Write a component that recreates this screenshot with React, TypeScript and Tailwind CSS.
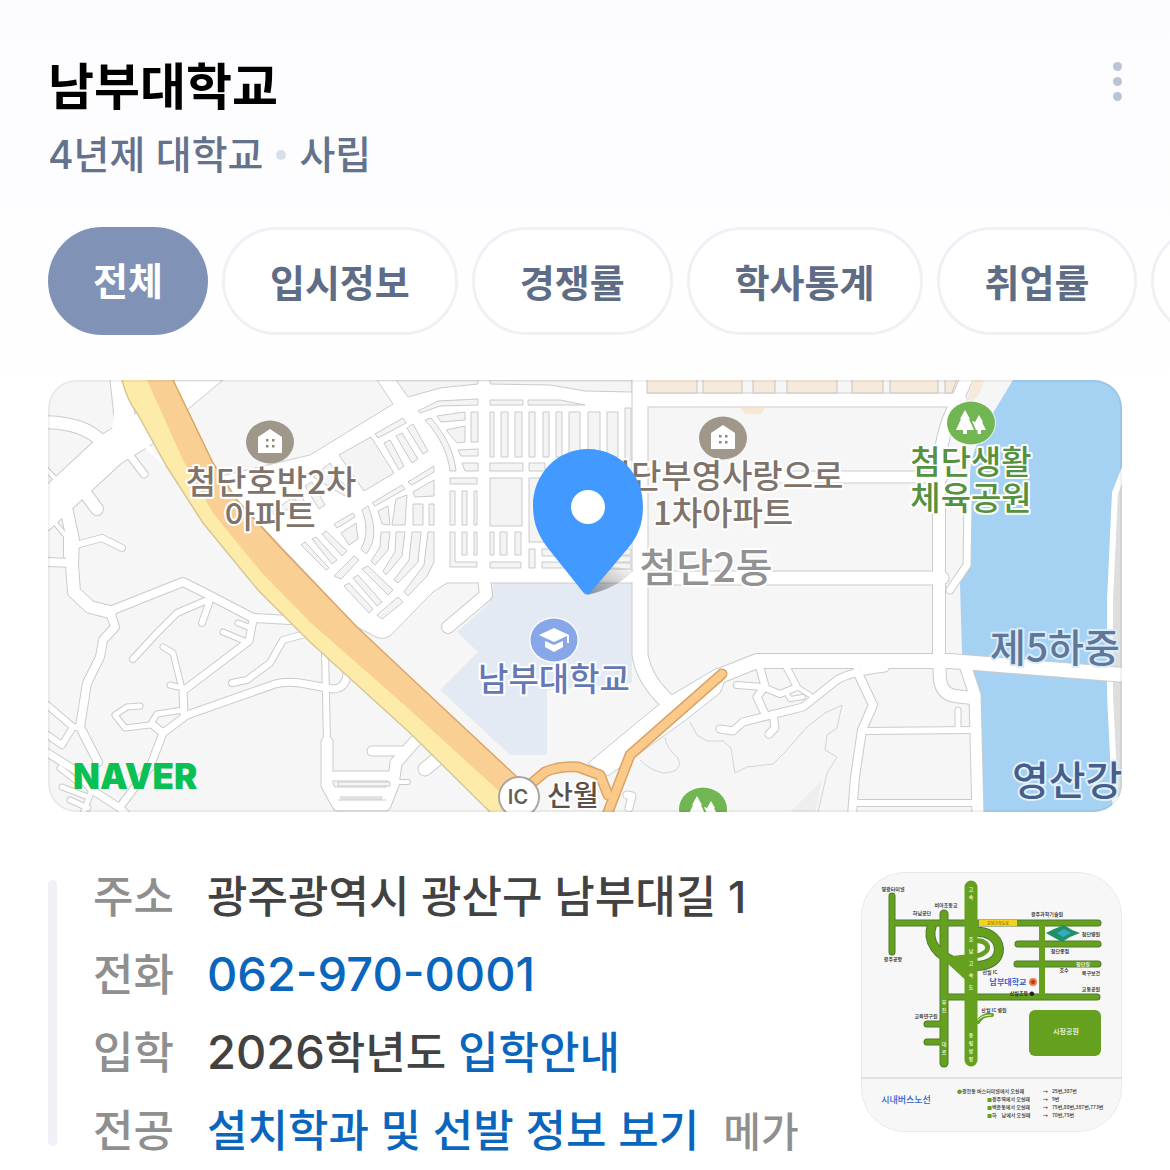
const SANS = "font-['Inter','Noto_Sans_CJK_KR',sans-serif]";

type Road = { d: string; w: number };

const roads: Road[] = [
  { d: 'M120 375 L126 430', w: 20 },
  { d: 'M150 425 L110 450 L40 515', w: 34 },
  { d: 'M40 422 C70 422 90 428 104 444', w: 12 },
  { d: 'M128 453 L144 474', w: 7 },
  { d: 'M86 494 L97 509', w: 12 },
  { d: 'M46 469 L62 486', w: 4 },
  { d: 'M67 512 L73 540 L72 565 L74 592 L90 607 L110 612', w: 12 },
  { d: 'M110 612 L115 627 L103 640 L100 657 L87 683 L80 727 L98 762', w: 8 },
  { d: 'M76 545 L102 538 L122 548', w: 6 },
  { d: 'M46 562 L72 563', w: 8 },
  { d: 'M56 524 L66 536 L66 556', w: 4 },
  { d: 'M110 611 L183 582 L205 593 L253 618 L290 620', w: 8 },
  { d: 'M205 601 L177 613 L157 633 L133 659', w: 6 },
  { d: 'M210 600 L202 623', w: 6 },
  { d: 'M253 620 L249 641 L183 691 L184 714', w: 7 },
  { d: 'M238 623 L251 628 M223 632 L247 642', w: 5 },
  { d: 'M163 647 L173 653 L183 693 M170 685 L178 687', w: 5 },
  { d: 'M232 683 L247 680 L270 663 L283 640 L305 634', w: 6 },
  { d: 'M163 733 L187 715 L275 684 Q285 681 300 683 L333 689 Q347 688 347 672', w: 7 },
  { d: 'M140 706 L127 707 L115 715 L125 728 L150 725 L157 714 L183 710', w: 5 },
  { d: 'M153 725 L163 733 L150 767 L120 807', w: 7 },
  { d: 'M46 704 L73 727 L62 745 L46 734 M73 727 L80 727', w: 6 },
  { d: 'M46 752 L75 770 L92 790 L120 808 L128 816', w: 7 },
  { d: 'M60 768 L80 784 M62 787 L88 797 M70 800 L88 808 M92 790 L82 816', w: 5 },
  { d: 'M325 650 L327 742', w: 6 },
  { d: 'M327 742 L327 785 L338 805 L385 805 L393 785 L396 763 L418 738', w: 11 },
  { d: 'M333 776 L388 776 M333 792 L388 792', w: 9 },
  { d: 'M395 782 L408 782', w: 4 },
  { d: 'M372 751 L402 751', w: 9 },
  { d: 'M425 769 L442 755', w: 13 },
  { d: 'M448 627 L486 595 L484 578', w: 12 },
  { d: 'M640 375 L640 655 Q644 680 668 702', w: 15 },
  { d: 'M640 578 L942 578', w: 13 },
  { d: 'M770 477 L942 477', w: 11 },
  { d: 'M640 400 L960 400', w: 13 },
  { d: 'M968 375 L952 412 Q939 440 939 480 L939 660 L940 680 Q942 694 955 696 L972 698', w: 12 },
  { d: 'M722 675 L757 661 L950 661 L1126 675', w: 14 },
  { d: 'M968 500 L967 565 L950 590', w: 7 },
  { d: 'M966 668 L975 695 L978 816', w: 11 },
  { d: 'M857 671 L873 705 L862 730 L855 777 L852 816', w: 8 },
  { d: 'M862 731 L975 730 M855 803 L977 803', w: 6 },
  { d: 'M958 730 L958 710', w: 5 },
  { d: 'M760 668 L765 686 L757 697 L765 714', w: 7 },
  { d: 'M737 685 L763 687 L780 694 L797 687 L787 668', w: 6 },
  { d: 'M720 729 L733 731 L743 722 L803 707 L837 680 Q850 672 885 668', w: 7 },
  { d: 'M773 714 L775 728 L769 734', w: 7 },
  { d: 'M797 687 L810 695 M786 692 L790 699 L803 697', w: 4 },
  { d: 'M627 795 L632 796 L629 808', w: 7 },
];

const blocks = [
  // upper strip and curved street
  'M396 380 H478 V384 L440 388 L408 397Z',
  'M490 380 H632 V392 L585 391 L550 385 L490 384Z',
  'M418 411 L438 401 L478 399 V405 L440 406 L420 413Z',
  'M490 400 H523 V405 H490Z', 'M528 400 H560 L585 405 H528Z',
  'M437 416 L465 412 V420 L441 422Z', 'M471 412 H478 V442 H471Z',
  'M446 430 L465 426 V442 L457 443Z', 'M458 450 L478 449 V456 H461Z',
  'M462 463 H478 V471 H465Z',
  'M425 420 L431 418 C446 436 454 452 456 471 H450 C448 454 440 436 425 420Z',
  // column blocks
  'M490 412 H494 V457 H490Z', 'M501 412 H508 V457 H501Z', 'M515 412 H522 V457 H515Z',
  'M529 412 H535 V457 H529Z', 'M543 412 H549 V457 H543Z', 'M556 412 H562 V457 H556Z',
  'M569 412 H580 V457 H569Z', 'M588 412 H600 V457 H588Z', 'M607 412 H618 V457 H607Z', 'M625 408 H631 V460 H625Z',
  'M490 463 H523 V471 H490Z', 'M529 463 H545 V471 H529Z',
  'M490 478 H522 V526 H490Z', 'M529 478 H560 V542 H529Z',
  'M450 478 H477 V484 H450Z', 'M450 491 H455 V525 H450Z', 'M462 491 H467 V525 H462Z', 'M474 491 H477 V525 H474Z',
  'M450 532 H455 V562 H477 V567 H450Z', 'M462 532 H467 V555 H462Z', 'M474 532 H477 V555 H474Z',
  'M490 532 H494 V555 H490Z', 'M500 532 H507 V555 H500Z', 'M515 532 H521 V555 H515Z',
  'M490 562 H521 V568 H490Z', 'M529 549 H535 V568 H529Z', 'M542 549 H570 V556 H542Z', 'M542 562 H572 V568 H542Z',
  'M608 549 H631 V555 H608Z', 'M604 556 H631 V562 H604Z', 'M600 563 H631 V569 H600Z',
  // diagonal blocks
  'M375 434 L403 418 L406 423 L378 438Z', 'M407 428 L413 424 L428 451 L423 454Z',
  'M384 443 L390 440 L404 466 L399 470Z', 'M396 436 L402 433 L418 459 L412 463Z',
  'M339 455 L371 437 L394 473 L364 491Z', 'M313 477 L330 463 L340 480 L350 490 L345 496Z',
  'M372 503 L402 485 L405 489 L375 506Z', 'M408 482 L434 466 V472 L412 485Z',
  'M413 492 L434 480 V496 L415 497Z', 'M413 504 H423 V525 H413Z', 'M429 504 H434 V525 H429Z',
  'M396 499 L407 495 L405 525 H392Z', 'M378 511 L388 506 L390 525 L382 524Z',
  'M362 510 L368 506 C377 528 375 543 366 554 L361 549 C368 536 367 524 362 510Z',
  'M341 533 L356 523 L358 539 L349 545Z', 'M334 524 L353 513 L355 517 L337 528Z',
  'M381 532 H390 L388 550 L375 565 L371 561 L380 547Z', 'M396 532 H405 L402 556 L386 575 L383 571 L395 552Z',
  'M412 532 H421 L418 562 L398 583 L394 580 L409 560Z', 'M428 532 H434 V562 L427 576 L408 596 L404 592 L424 565Z',
  'M334 576 L354 556 L359 560 L341 579Z', 'M322 534 L326 531 L347 551 L342 556Z', 'M312 539 L316 537 L337 560 L332 564Z',
  'M362 569 L368 566 L393 590 L388 595Z', 'M353 578 L358 575 L382 602 L377 606Z',
  'M344 586 L349 583 L373 609 L369 613Z', 'M377 615 L398 597 L403 602 L382 619Z',
  'M272 512 L292 498 L296 503 L276 517Z', 'M305 486 L312 482 L325 505 L319 509Z', 'M293 496 L299 492 L311 513 L305 516Z',
  'M301 545 L305 542 L329 568 L326 570Z',
];

const beige = ['M647 378 H697 V393 H647Z', 'M703 378 H742 V393 H703Z', 'M753 378 H775 V393 H753Z', 'M787 378 H837 V393 H787Z', 'M852 378 H883 V393 H852Z', 'M890 378 H938 V393 H890Z', 'M945 378 H957 L952 393 H945Z'];

function MapLabel({ x, y, size, color, halo = '#ffffff', anchor = 'middle', children }: { x: number; y: number; size: number; color: string; halo?: string; anchor?: 'start' | 'middle'; children: string }) {
  return (
    <text x={x} y={y} fontSize={size} fill={color} stroke={halo} strokeWidth="4" strokeLinejoin="round" paintOrder="stroke" textAnchor={anchor} className="font-['Noto_Sans_CJK_KR',sans-serif] font-medium">
      {children}
    </text>
  );
}

function HomeMarker({ x, y }: { x: number; y: number }) {
  return (
    <g transform={`translate(${x} ${y})`}>
      <ellipse rx="24" ry="21.5" fill="#a0978b" />
      <path d="M-12 -5 L0 -13 L12 -5 V11 H-12Z" fill="#fff" />
      <path d="M-4 -3 h2.500 v2.500 h-2.500z M2 -3 h2.500 v2.500 h-2.500z M-4 3 h2.500 v2.500 h-2.500z M2 3 h2.500 v2.500 h-2.500z" fill="#8f867b" />
    </g>
  );
}

function ParkMarker({ x, y }: { x: number; y: number }) {
  return (
    <g transform={`translate(${x} ${y})`}>
      <ellipse rx="25" ry="22.500" fill="#fff" opacity="0.7" />
      <ellipse rx="24" ry="21.5" fill="#72b653" />
      <path d="M-6 -13 L-1 -4 H-2 L3 7 H-4 V11 H-8 V7 H-15 L-10 -4 H-11Z" fill="#fff" />
      <path d="M8 -8 L12 -1 H11 L15 7 H10 V11 H6.500 V7 H5 L1 -2 L4 -1Z" fill="#fff" />
    </g>
  );
}

function CampusMap() {
  return (
    <svg viewBox="48 380 1074 432" className="block h-auto w-full" role="img" aria-label="남부대학교 위치 지도">
      <defs>
        <linearGradient id="pinShadow" x1="0" x2="1" y1="1" y2="0">
          <stop offset="0" stopColor="#000" stopOpacity="0.4" />
          <stop offset="1" stopColor="#000" stopOpacity="0" />
        </linearGradient>
      </defs>
      <rect x="48" y="380" width="1074" height="432" fill="#f6f6f6" />

      <path d="M493 583 H632 V683 L547 690 V755 H510 L440 690 L478 652 L457 632 L490 602Z" fill="#e3eaf4" />
      <path d="M165 380 H223 L187 410Z" fill="#fff" stroke="#cacaca" />
      <path d="M213 478 L310 455 L393 404 L377 380 H640 V583 H447 L433 592 L390 636 Q384 640 376 637 L357 627 L237 500Z" fill="#fff" stroke="#cccccc" />
      <g fill="#f4f4f4" stroke="#cacaca" strokeWidth="1">
        {blocks.map((d) => <path key={d} d={d} />)}
      </g>

      <path d="M1013 380 L993 413 C978 440 970 455 970 480 V563 L960 583 L962 653 L972 672 L977 697 L983 812 H1122 V380Z" fill="#a5d1f2" />
      <path d="M1126 455 L1115 493 L1110 600 L1111 660 L1110 695 L1116 816 H1126Z" fill="#dedede" />
      <path d="M1126 465 L1115 493 L1110 600 V665 L1110 695 L1116 816" fill="none" stroke="#fff" strokeWidth="6" />
      <g fill="none" stroke="#d4d4d4" strokeWidth="1">
        <path d="M690 722 L697 735 L707 741 H723 L731 748 L735 773 L747 767 L773 764 L785 752 L807 727 L825 713 L842 705 L837 728 L827 735 L825 750 L837 757 L827 773 L818 812" />
        <path d="M665 737 Q666 748 678 758 Q684 772 663 773 Q650 770 640 760" />
      </g>
      <path d="M822 780 L815 812 H790Z" fill="#eeeeee" />

      <g fill="none" stroke="#cbcbcb" strokeLinecap="round" strokeLinejoin="round">
        {roads.map((r) => <path key={r.d} d={r.d} strokeWidth={r.w + 2} />)}
      </g>
      <path d="M717 668 L668 697 L588 763 L608 776 L683 722 L720 693 L727 676Z" fill="#fff" stroke="#c3ccd6" />
      <g fill="none" stroke="#fff" strokeLinecap="round" strokeLinejoin="round">
        {roads.map((r) => <path key={r.d} d={r.d} strokeWidth={r.w} />)}
      </g>
      <path d="M118 380 L137 430 L167 467 L145 448 L128 452 L110 450 L112 430Z" fill="#fff" />
      <path d="M476 570 H492 V582 H476Z M618 572 H640 V582 H618Z M634 381 H646 V392 H634Z" fill="#fff" />
      <path d="M338 782 h52 v4 h-52z M338 800 h48" fill="#f4f4f4" stroke="#cacaca" />

      <g fill="#f6eadd" stroke="#c9c3bd" strokeWidth="1">
        {beige.map((d) => <path key={d} d={d} />)}
      </g>
      <path d="M741 408 h24 l-4 6 h-16z" fill="#f8e8d2" />
      <path d="M972 380 h12 l-4 14 l-14 12z" fill="#f6eadd" />

      <path d="M122 380 Q127 400 137 413 L167 467 L203 523 L258 590 L310 642 L410 733 L490 812 H530 L517 777 L410 677 L357 627 L280 547 L237 500 L213 463 L173 380Z" fill="#fdebaa" />
      <path d="M147 380 L183 460 L213 513 L262 573 L310 622 L410 710 L500 792 L505 812 H535 L517 777 L410 677 L357 627 L280 547 L237 500 L213 463 L173 380Z" fill="#facf93" />
      <path d="M173 380 L213 463 L237 500 L280 547 L357 627 L410 677 L517 777" fill="none" stroke="#dda468" strokeWidth="1.500" />
      <path d="M122 380 Q127 400 137 413 L167 467 L203 523 L258 590 L310 642 L410 733 L490 812" fill="none" stroke="#d6c795" strokeWidth="1.500" />

      <g fill="none" strokeLinecap="round" strokeLinejoin="round">
        <g stroke="#dca365" strokeWidth="11">
          <path d="M526 788 L545 772 Q558 766 578 767 L600 775 L608 795" />
          <path d="M722 674 L630 755 L605 820" />
        </g>
        <g stroke="#fbca8a" strokeWidth="8">
          <path d="M526 788 L545 772 Q558 766 578 767 L600 775 L608 795" />
          <path d="M722 674 L630 755 L605 820" />
        </g>
      </g>
      <circle cx="519" cy="797" r="20" fill="#fff" stroke="#aaa59f" strokeWidth="2" />
      <text x="518" y="804" fontSize="20" fill="#67605a" textAnchor="middle" className="font-['Inter',sans-serif] font-semibold">IC</text>

      <HomeMarker x={270} y={442} />
      <HomeMarker x={723} y={438} />
      <ParkMarker x={971} y={423} />
      <ParkMarker x={703} y={809} />
      <g transform="translate(554 640)">
        <ellipse rx="25" ry="23" fill="#fff" opacity="0.8" />
        <ellipse rx="23.500" ry="21.500" fill="#88a7e8" />
        <path d="M-15 -5 L0 -12 L15 -5 L0 2Z M-9 1 L0 5 L9 1 V7 L0 12 L-9 7Z M13 -5 h2 V3 h-2z" fill="#fff" />
      </g>

      <MapLabel x={271} y={494} size={33} color="#80736a">첨단호반2차</MapLabel>
      <MapLabel x={270} y={528} size={33} color="#80736a">아파트</MapLabel>
      <MapLabel x={722} y={488} size={33} color="#80736a">첨단부영사랑으로</MapLabel>
      <MapLabel x={723} y={525} size={33} color="#80736a">1차아파트</MapLabel>
      <MapLabel x={706} y={582} size={40} color="#929292">첨단2동</MapLabel>
      <MapLabel x={971} y={474} size={33} color="#55913f">첨단생활</MapLabel>
      <MapLabel x={971} y={510} size={33} color="#55913f">체육공원</MapLabel>
      <MapLabel x={554} y={691} size={33} color="#6478b4">남부대학교</MapLabel>
      <MapLabel x={990} y={662} size={39} color="#60779a" halo="#d9ecfa" anchor="start">제5하중</MapLabel>
      <MapLabel x={1012} y={795} size={40} color="#455f8c" halo="#e2f0fb" anchor="start">영산강</MapLabel>
      <MapLabel x={573} y={806} size={28} color="#5d4f49">산월</MapLabel>

      <path d="M587 595 L612 566 L634 570 Q618 588 587 595Z" fill="url(#pinShadow)" />
      <path d="M588 449 C557 449 533 474 533 506 C533 524 539 536 547 547 L583 592 Q587 597 591 592 L629 547 C638 536 643 524 643 506 C643 474 619 449 588 449Z" fill="#4299ff" />
      <circle cx="588" cy="507" r="17" fill="#fff" />

      <text x="73" y="789" fontSize="35" fill="#0abf53" className="font-['Inter',sans-serif] font-black">NAVER</text>
    </svg>
  );
}

const directions: { x: number; y: number; t: string; c?: string; s?: number }[] = [
  { x: 893, y: 891, t: '영광터미널' }, { x: 893, y: 961, t: '광주공항' }, { x: 922, y: 915, t: '하남공단' },
  { x: 946, y: 907, t: '비아초등교' }, { x: 1047, y: 916, t: '광주과학기술원' }, { x: 1091, y: 936, t: '첨단병원' },
  { x: 1060, y: 953, t: '첨단종점' }, { x: 1064, y: 972, t: '호수' }, { x: 1091, y: 975, t: '북구보건' }, { x: 1091, y: 991, t: '교통공원' },
  { x: 990, y: 974, t: '산월 IC' }, { x: 1022, y: 995, t: '산월초등 ●' }, { x: 994, y: 1012, t: '산월 IC 병원' }, { x: 926, y: 1018, t: '교육연구원' },
  { x: 1083, y: 966, t: '첨단길', c: '#fff' }, { x: 1066, y: 1034, t: '시청공원', c: '#fff', s: 7 },
];

function VerticalText({ x, y, step, text }: { x: number; y: number; step: number; text: string }) {
  return <>{[...text].map((t, i) => <text key={i} x={x} y={y + i * step}>{t}</text>)}</>;
}

function DirectionsThumb() {
  return (
    <svg viewBox="861 872 261 260" className="block h-auto w-full" role="img" aria-label="남부대학교 찾아오시는 길 약도">
      <rect x="861" y="872" width="261" height="260" fill="#f7f7f7" />
      <path d="M861 1078 H1122" stroke="#e3e3e3" strokeWidth="2" />
      <g fill="none" strokeLinecap="round" strokeLinejoin="round">
        <g stroke="#4d7a2a">
          <path d="M892 896 V952 M892 923 H1098 M1018 944 H1098 M1017 964 H1098 M948 997 H1097 M927 1024 H942 M927 1042 H942" strokeWidth="7" />
          <path d="M932 925 C926 942 938 956 956 962 C976 970 999 966 999 949 C998 936 986 931 974 932" strokeWidth="10" />
          <path d="M944 914 V1063" strokeWidth="9" />
        </g>
        <g stroke="#65a11f">
          <path d="M892 896 V952 M892 923 H1098 M1018 944 H1098 M1017 964 H1098 M948 997 H1097 M927 1024 H942 M927 1042 H942" strokeWidth="5" />
          <path d="M1042 925 V995" strokeWidth="6" />
          <path d="M932 925 C926 942 938 956 956 962 C976 970 999 966 999 949 C998 936 986 931 974 932" strokeWidth="8" />
          <path d="M978 1022 Q982 1014 992 1015" strokeWidth="4" />
          <path d="M944 914 V1063" strokeWidth="7" />
          <path d="M971 887 V1060" strokeWidth="13" />
          <path d="M974 941 C986 939 992 948 984 953 C974 960 962 954 946 961" strokeWidth="5" />
        </g>
        <path d="M978 1020 Q982 1015 991 1015" stroke="#f2f7ea" strokeWidth="1" />
      </g>
      <path d="M946 962 L972 966 V986Z" fill="#65a11f" />
      <rect x="979" y="920" width="38" height="6" fill="#f5d21e" />
      <path d="M1046 933 L1054 929 L1064 925 L1072 930 L1080 933 L1070 937 L1062 942 L1053 937Z" fill="#1f9067" />
      <path d="M1057 933 L1064 929 L1071 933 L1063 937Z" fill="#38a9c2" />
      <rect x="1029" y="1010" width="72" height="46" rx="6" fill="#65a11f" />
      <circle cx="1033" cy="982" r="4" fill="#ef7b3e" />
      <circle cx="1033" cy="982" r="2" fill="#b9321f" />
      <g textAnchor="middle" className="font-['Noto_Sans_CJK_KR',sans-serif] font-medium">
        {directions.map((l) => <text key={l.t + l.x} x={l.x} y={l.y} fontSize={l.s ?? 5} fill={l.c ?? '#222'}>{l.t}</text>)}
        <text x="998" y="925" fontSize="4" fill="#7a5500">호남고속도로</text>
        <text x="1008" y="985" fontSize="8" fill="#2f61cf" className="font-bold">남부대학교</text>
        <g fontSize="5" fill="#eef7e2">
          <VerticalText x={971} y={891} step={8} text="고속" />
          <VerticalText x={971} y={941} step={12} text="호남고속도" />
          <VerticalText x={971} y={1037} step={8} text="동림방향" />
          <VerticalText x={944} y={1004} step={8} text="무진" />
          <VerticalText x={944} y={1046} step={8} text="대로" />
        </g>
        <text x="906" y="1103" fontSize="9" fill="#2f61cf">시내버스노선</text>
      </g>
      <g fontSize="5" fill="#333" className="font-['Noto_Sans_CJK_KR',sans-serif] font-medium">
        <text x="957" y="1093"><tspan fill="#65a11f">●</tspan>광천동 버스터미널에서 오실때</text>
        <text x="987" y="1101"><tspan fill="#65a11f">■</tspan>광주역에서 오실때</text>
        <text x="987" y="1109"><tspan fill="#65a11f">■</tspan>백운동에서 오실때</text>
        <text x="987" y="1117"><tspan fill="#65a11f">■</tspan>하　남에서 오실때</text>
        <text x="1043" y="1093">→</text><text x="1043" y="1101">→</text><text x="1043" y="1109">→</text><text x="1043" y="1117">→</text>
        <text x="1052" y="1093">25번,387번</text>
        <text x="1052" y="1101">9번</text>
        <text x="1052" y="1109">75번,88번,387번,773번</text>
        <text x="1052" y="1117">70번,75번</text>
      </g>
    </svg>
  );
}

const tabs = ['입시정보', '경쟁률', '학사통계', '취업률', '등록금'];

export default function App() {
  return (
    <main className={`min-h-screen overflow-hidden bg-linear-to-b from-[#fcfcff] to-white to-35% ${SANS}`}>
      <header className="flex items-start justify-between px-12 pt-14">
        <div>
          <h1 className="text-[50px] leading-[62px] font-bold text-black">남부대학교</h1>
          <p className="mt-2 flex items-center text-[39px] leading-[58px] font-medium text-[#64728b]">
            4년제 대학교
            <span className="mx-[13px] size-[10px] rounded-full bg-[#d6dee7]" />
            사립
          </p>
        </div>
        <button type="button" aria-label="더보기" className="flex flex-col gap-1.5 pt-[6px]">
          <span className="size-[9px] rounded-full bg-[#bac4d9]" />
          <span className="size-[9px] rounded-full bg-[#bac4d9]" />
          <span className="size-[9px] rounded-full bg-[#bac4d9]" />
        </button>
      </header>

      <nav className="mt-[43px] flex gap-[14px] overflow-hidden pl-12 text-[38px] font-bold whitespace-nowrap text-[#5f6c86]">
        <button type="button" aria-current="true" className="h-[108px] shrink-0 rounded-full bg-[#8093b6] px-[45px] text-white">전체</button>
        {tabs.map((t) => (
          <button type="button" key={t} className="h-[108px] shrink-0 rounded-full border-3 border-[#f0f0f5] bg-white px-[45px] pt-1">{t}</button>
        ))}
      </nav>

      <a href="#map" className="mx-12 mt-[45px] block overflow-hidden rounded-[28px] outline-2 -outline-offset-2 outline-black/5">
        <CampusMap />
      </a>

      <section className="mt-[46px] flex items-start pr-12 pl-12">
        <div className="mt-[22px] mb-6 w-[9px] shrink-0 self-stretch rounded-full bg-[#f0f1f6]" />
        <dl className="ml-9 grid flex-1 auto-rows-[78px] grid-cols-[auto_1fr] gap-x-[33px] text-[44px] leading-[78px] font-medium whitespace-nowrap text-[#424242] [&>dt]:text-[#8f8f8f]">
          <dt>주소</dt>
          <dd>광주광역시 광산구 남부대길 1</dd>
          <dt>전화</dt>
          <dd><a href="tel:062-970-0001" className="text-[47px] leading-none text-[#0a66bc]">062-970-0001</a></dd>
          <dt>입학</dt>
          <dd><span className="text-[47px] leading-none">2026</span>학년도 <a href="#admission" className="text-[#0a66bc]">입학안내</a></dd>
          <dt>전공</dt>
          <dd>
            <a href="#majors" className="text-[#0a66bc]">설치학과 및 선발 정보 보기</a>
            <span className="ml-6 text-[41px] leading-none text-[#8f8f8f]">메가</span>
          </dd>
        </dl>
        <a href="#directions" className="mt-[14px] block w-[261px] shrink-0 overflow-hidden rounded-[44px] outline-1 -outline-offset-1 outline-black/5">
          <DirectionsThumb />
        </a>
      </section>
    </main>
  );
}
